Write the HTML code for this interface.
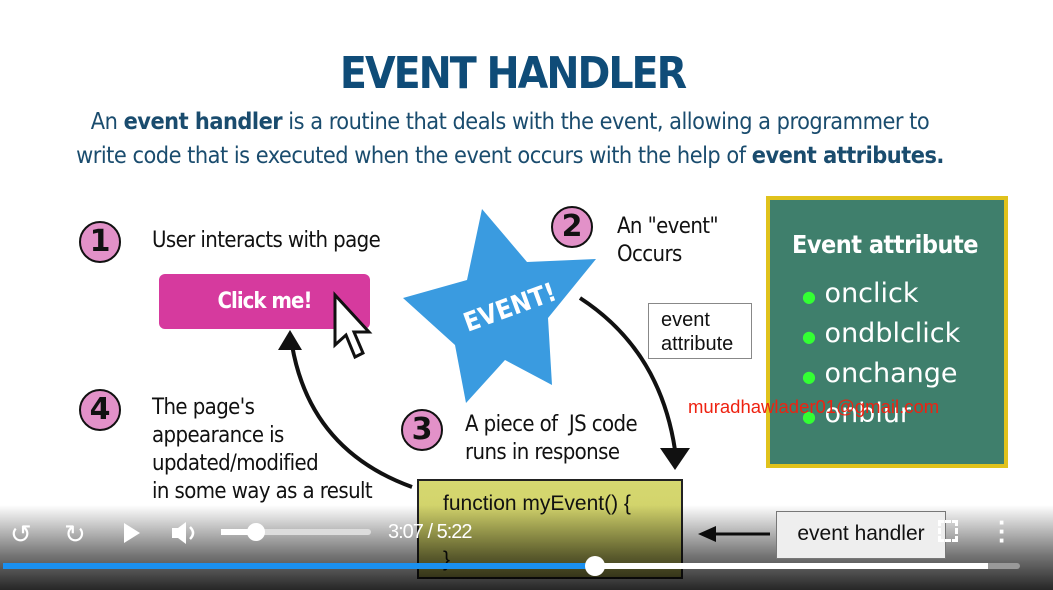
<!DOCTYPE html>
<html><head><style>
body{margin:0;width:1053px;height:590px;overflow:hidden;background:#fff;position:relative;font-family:"Liberation Sans",sans-serif}
.a{position:absolute}
.t{font-family:"DejaVu Sans Condensed","DejaVu Sans",sans-serif}
.c{position:absolute;width:42px;height:42px;border-radius:50%;background:#e291c8;border:2px solid #111;box-sizing:border-box;font:bold 30px "DejaVu Sans",sans-serif;text-align:center;line-height:38px;color:#111}
.l{position:absolute;font-size:22px;color:#111;line-height:28px;font-family:"DejaVu Sans Condensed","DejaVu Sans",sans-serif;letter-spacing:-0.6px}
</style></head><body>
<div class="a t" style="left:40px;width:945px;top:48px;text-align:center;font-size:44px;font-weight:bold;color:#0f4c78;letter-spacing:-2px">EVENT HANDLER</div>
<div class="a t" style="left:40px;width:940px;top:105px;text-align:center;font-size:23.3px;color:#1a4c6e;line-height:34px;letter-spacing:-0.5px">An <b>event handler</b> is a routine that deals with the event, allowing a programmer to<br>write code that is executed when the event occurs with the help of <b>event attributes.</b></div>
<svg class="a" style="left:0;top:0" width="1053" height="590">
<polygon points="482,209 527,262 596,259 548,318 552,385 505,360 466,403 455,345 403,298 467,280" fill="#3a9be0"/>
<path d="M580,298 Q660,350 675,450" stroke="#111" stroke-width="4" fill="none"/>
<polygon points="660,448 690,448 675,470" fill="#111"/>
<path d="M412,487 Q310,450 292,345" stroke="#111" stroke-width="4" fill="none"/>
<polygon points="278,350 302,350 290,330" fill="#111"/>
<line x1="710" y1="534" x2="770" y2="534" stroke="#111" stroke-width="3"/>
<polygon points="698,534 716,526 716,542" fill="#111"/>
</svg>
<div class="a t" style="left:462px;top:293px;font-size:26px;color:#fff;font-weight:bold;transform:rotate(-20deg)">EVENT!</div>
<div class="c" style="left:79px;top:221px">1</div><div class="l" style="left:152px;top:227px">User interacts with page</div>
<div class="c" style="left:551px;top:206px">2</div><div class="l" style="left:617px;top:213px">An "event"<br>Occurs</div>
<div class="c" style="left:401px;top:409px">3</div><div class="l" style="left:465px;top:411px">A piece of &nbsp;JS code<br>runs in response</div>
<div class="c" style="left:79px;top:389px">4</div><div class="l" style="left:152px;top:394px">The page's<br>appearance is<br>updated/modified<br>in some way as a result</div>
<div class="a" style="left:159px;top:274px;width:211px;height:55px;background:#d63a9e;border-radius:6px;color:#fff;font:bold 22px 'DejaVu Sans Condensed',sans-serif;text-align:center;line-height:55px;letter-spacing:-1px">Click me!</div>
<svg class="a" style="left:0;top:0" width="400" height="400"><path d="M335,295 L335,345 L346,335 L355,357 L363,353 L354,332 L369,332 Z" fill="#fff" stroke="#111" stroke-width="3"/></svg>
<div class="a" style="left:648px;top:303px;width:104px;height:56px;border:1px solid #888;font-size:20px;line-height:24px;padding:4px 12px;box-sizing:border-box;color:#111">event<br>attribute</div>
<div class="a" style="left:766px;top:196px;width:242px;height:272px;background:#3f7f6c;border:4px solid #e0c21c;box-sizing:border-box;color:#fff">
<div class="t" style="margin:30px 0 0 22px;font-size:25px;font-weight:bold;letter-spacing:-0.5px">Event attribute</div>
<div style="margin:16px 0 0 32px;font-size:27px;line-height:37px;font-family:'DejaVu Sans',sans-serif">
<div><span style="color:#3f3;font-size:16px">●</span> onclick</div><div><span style="color:#3f3;font-size:16px">●</span> ondblclick</div><div><span style="color:#3f3;font-size:16px">●</span> onchange</div><div><span style="color:#3f3;font-size:16px">●</span> onblur</div></div></div>
<div class="a" style="left:688px;top:396px;color:#e21;font-size:18.5px">muradhawlader01@gmail.com</div>
<div class="a" style="left:417px;top:479px;width:266px;height:100px;background:linear-gradient(#d6d870,#c8c860);border:2px solid #222;box-sizing:border-box;font-size:21px;padding:9px 0 0 24px;color:#111;line-height:28px">function myEvent() {<br><br>}</div>
<div class="a" style="left:0;top:505px;width:1053px;height:85px;background:linear-gradient(rgba(0,0,0,0),rgba(0,0,0,0.55) 60%,rgba(0,0,0,0.85))"></div>
<div class="a" style="left:776px;top:511px;width:168px;height:46px;border:1px solid #777;background:#eee;font-size:21px;line-height:44px;text-align:center;color:#111">event handler</div>
<div class="a" style="left:10px;top:519px;color:#fff;font-size:26px">↺</div>
<div class="a" style="left:64px;top:519px;color:#fff;font-size:26px">↻</div>
<svg class="a" style="left:120px;top:520px" width="110" height="26"><polygon points="4,3 20,13 4,23" fill="#fff"/><polygon points="52,8 58,8 66,2 66,24 58,18 52,18" fill="#fff"/><path d="M70,7 Q76,13 70,19" stroke="#fff" stroke-width="2.5" fill="none"/></svg>
<div class="a" style="left:221px;top:529px;width:150px;height:6px;background:#ddd;border-radius:3px"></div>
<div class="a" style="left:221px;top:529px;width:36px;height:6px;background:#fff"></div>
<div class="a" style="left:247px;top:523px;width:18px;height:18px;border-radius:50%;background:#fff"></div>
<div class="a" style="left:388px;top:521px;color:#fff;font-size:20px;letter-spacing:-1px">3:07 / 5:22</div>
<div class="a" style="left:938px;top:520px;width:20px;height:22px;border:3px dashed #fff;box-sizing:border-box"></div>
<div class="a" style="left:998px;top:518px;color:#fff;font-size:26px;line-height:9px;font-weight:bold">·<br>·<br>·</div>
<div class="a" style="left:3px;top:563px;width:1017px;height:6px;background:#999;border-radius:3px"></div>
<div class="a" style="left:3px;top:563px;width:985px;height:6px;background:#fff"></div>
<div class="a" style="left:3px;top:563px;width:592px;height:6px;background:#1a90f0"></div>
<div class="a" style="left:585px;top:556px;width:20px;height:20px;border-radius:50%;background:#fff"></div>
</body></html>
